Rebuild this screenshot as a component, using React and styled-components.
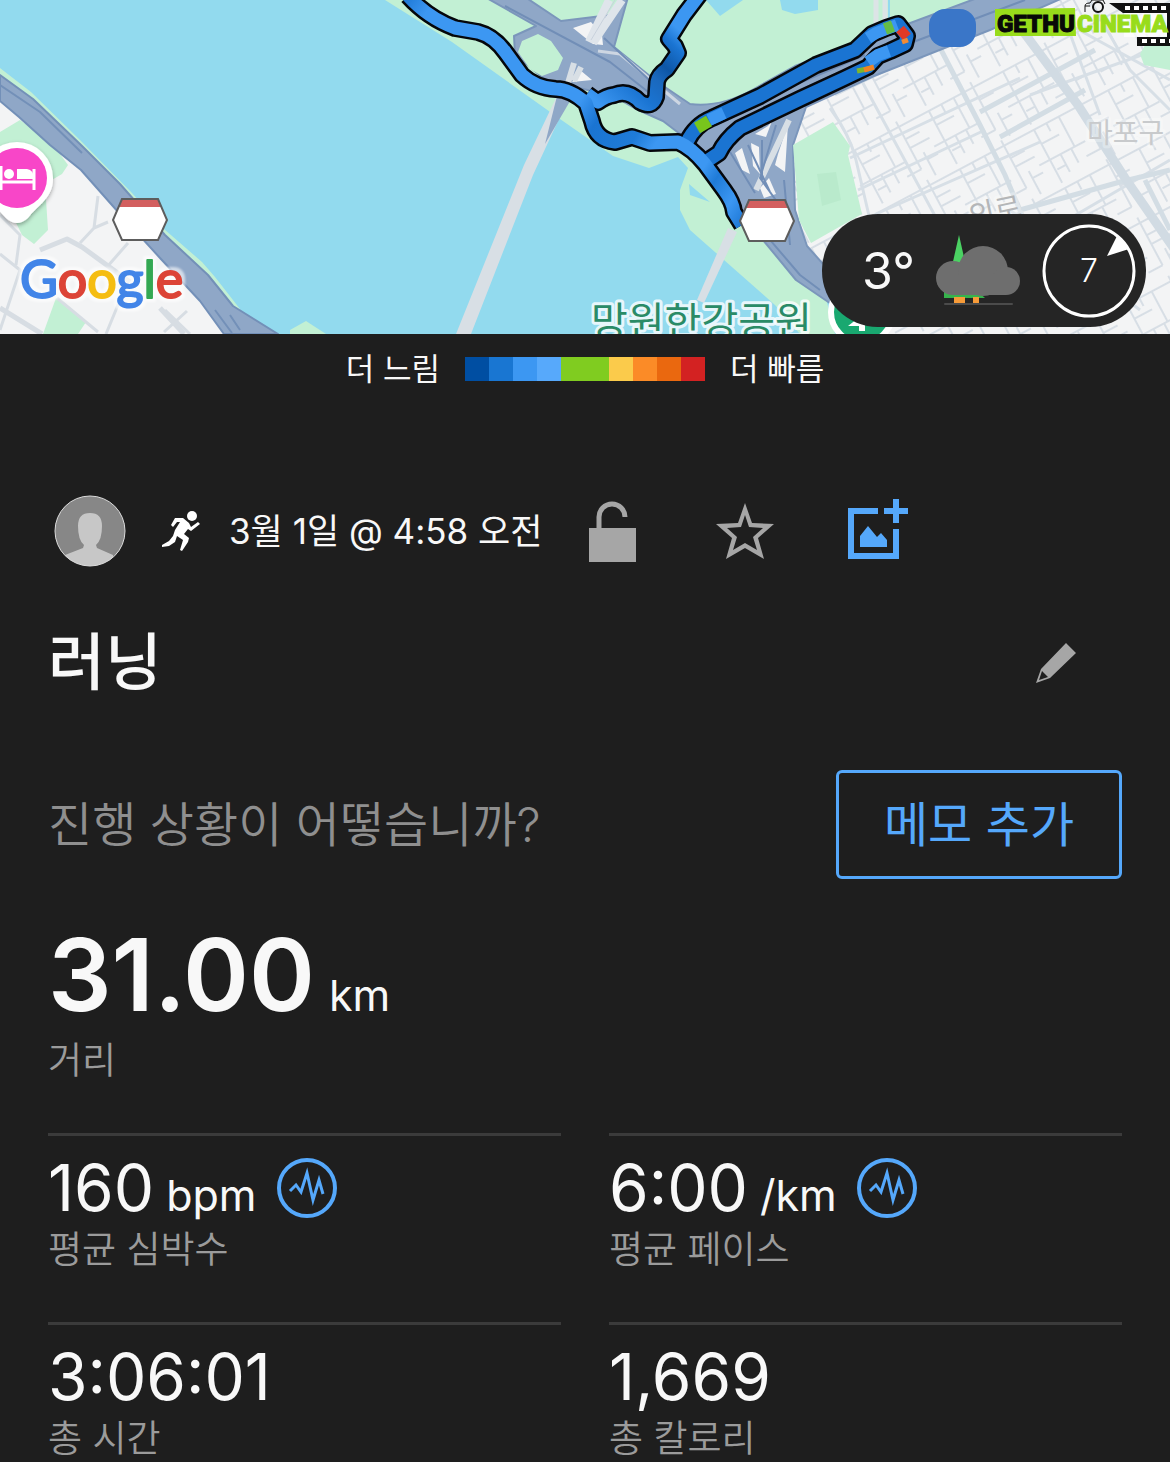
import React from 'react'
import styled, { createGlobalStyle } from 'styled-components'

const GlobalStyle = createGlobalStyle`
  * {
    box-sizing: border-box;
  }
  body {
    margin: 0;
    background: #1e1e1e;
    color: #f8f8f8;
    font-family: Inter, 'Noto Sans CJK KR', sans-serif;
  }
`

const MapArea = styled.section`
  position: relative;
  height: 334px;
  overflow: hidden;
  background: #92daee;
`

const MapCanvas = styled.svg`
  display: block;
  width: 100%;
  height: 100%;
`

const Weather = styled.div`
  position: absolute;
  right: 24px;
  bottom: 7px;
  display: flex;
  align-items: center;
  justify-content: space-between;
  width: 324px;
  height: 113px;
  padding: 0 10px 0 40px;
  border-radius: 56px;
  background: #252525;
`

const Temperature = styled.span`
  font-size: 50px;
  line-height: 60px;
`

const Legend = styled.div`
  display: flex;
  align-items: center;
  justify-content: center;
  gap: 25px;
  padding-top: 13px;
  font-size: 31px;
  line-height: 44px;
`

const Scale = styled.div`
  display: flex;
`

const Swatch = styled.span`
  width: 24px;
  height: 24px;
  background: ${props => props.$color};
`

const Content = styled.main`
  padding: 104px 48px 0;
`

const Meta = styled.header`
  display: flex;
  align-items: center;
  height: 72px;
  padding-left: 6px;
`

const Sport = styled.span`
  display: flex;
  margin: 0 28px 0 36px;
`

const When = styled.time`
  margin-right: 34px;
  font-size: 35px;
  line-height: 44px;
  white-space: nowrap;
`

const IconButton = styled.button`
  display: flex;
  align-items: center;
  justify-content: center;
  width: 72px;
  height: 72px;
  padding: 0;
  border: 0;
  background: none;
  color: ${props => (props.$active ? '#55a8fb' : '#a6a6a6')};
  cursor: pointer;
`

const Actions = styled.div`
  display: flex;
  gap: 61px;
`

const TitleRow = styled.div`
  display: flex;
  align-items: center;
  justify-content: space-between;
  margin-top: 52px;
  padding-right: 30px;
`

const Title = styled.h1`
  margin: 0;
  font-size: 62px;
  font-weight: 500;
  line-height: 88px;
`

const NoteRow = styled.div`
  display: flex;
  align-items: center;
  justify-content: space-between;
  margin-top: 63px;
`

const Question = styled.p`
  margin: 0;
  color: #8f8f8f;
  font-size: 48px;
  font-weight: 350;
  line-height: 60px;
`

const NoteButton = styled.button`
  width: 286px;
  height: 109px;
  padding: 0;
  border: 3px solid #55a8fb;
  border-radius: 6px;
  background: none;
  color: #55a8fb;
  font-family: inherit;
  font-size: 48px;
  line-height: 60px;
  cursor: pointer;
`

const Stats = styled.dl`
  display: grid;
  grid-template-columns: 1fr 1fr;
  gap: 50px 48px;
  margin: 36px 0 0;
`

const Stat = styled.div`
  display: flex;
  flex-direction: column-reverse;
  padding-top: 16px;
  border-top: 3px solid #3b3b3b;
`

const MainStat = styled(Stat)`
  grid-column: 1 / -1;
  padding: 0;
  border: 0;
`

const Value = styled.dd`
  display: flex;
  align-items: ${props => (props.$large ? 'baseline' : 'center')};
  gap: ${props => (props.$large ? '14px' : '20px')};
  margin: 0;
  font-size: ${props => (props.$large ? '100px' : '64px')};
  font-weight: ${props => (props.$large ? 600 : 400)};
  line-height: ${props => (props.$large ? '120px' : '72px')};
`

const Unit = styled.small`
  font-size: 43px;
  font-weight: 400;
  line-height: 44px;
  white-space: pre;
`

const Label = styled.dt`
  margin-top: 4px;
  color: #9b9b9b;
  font-size: 37px;
  font-weight: 350;
  line-height: 44px;
`

const ChartLink = styled.a`
  display: flex;
  color: #55a8fb;
`

const paces = [
  '#004ea2',
  '#1976d2',
  '#3c97f2',
  '#57a9fb',
  '#80cc20',
  '#80cc20',
  '#fbcb4b',
  '#fb8b27',
  '#ea680f',
  '#d32222',
]

const stats = [
  { label: '평균 심박수', value: '160', unit: 'bpm', chart: true },
  { label: '평균 페이스', value: '6:00', unit: '/km', chart: true },
  { label: '총 시간', value: '3:06:01' },
  { label: '총 칼로리', value: '1,669' },
]

const mainTrack =
  'M408 -4 Q428 18 455 28 L478 32 Q494 36 506 53 L522 75 Q536 88 556 89 Q570 89 586 103 L592 121 Q596 140 615 142 L632 137 L650 143 L678 142 Q692 148 705 164 L724 190 Q733 202 734 212 L742 225'
const bridgeTrack =
  'M587 94 L598 102 Q606 96 614 95 Q628 89 640 102 Q652 109 656 97 L657 82 Q658 75 667 69 L678 53 L675 46 L669 39 L684 15 L700 -6'
const loopTrack =
  'M687 142 Q695 125 712 118 L760 96 L816 65 L855 50 L872 34 L886 28 L898 24 L907 36 L905 44 L890 51 L878 56 L868 67 L845 78 L800 99 L740 128 Q725 140 719 153 L707 161'

const Streets = () => (
  <g clipPath="url(#city)">
    <rect x="780" width="390" height="334" fill="#f3f4f5" />
    <rect x="780" width="390" height="334" fill="url(#blocks)" />
    <g fill="none" stroke="#d7dfe6" strokeWidth="3">
      <path d="M858 74 L940 225 M830 108 Q850 135 856 160 L870 220 M850 158 L1020 78 M858 190 L985 130 M876 214 L1040 142 M835 95 L1010 10" />
      <path d="M1030 95 L1170 45 M1070 25 L1170 80 M1090 0 L1130 70 L1170 110 M1065 20 L1100 115 M1010 210 L1140 310 M1170 160 L1050 230" />
    </g>
    <g fill="none" stroke="#d3dde4" strokeWidth="5">
      <path d="M938 44 L980 125 L1005 175 L1022 215 M980 112 L1095 50 M1000 137 L1085 90 M1020 210 L1120 182 L1170 170" />
      <path d="M1020 215 L960 260 M1145 180 L1170 230" />
    </g>
    <path d="M1022 30 L1078 105 L1125 178 L1175 250" fill="none" stroke="#d1dbe3" strokeWidth="9" />
    <path d="M1140 54 L1148 40 L1170 35 V70 L1144 65Z" fill="#c2f0d4" />
  </g>
)

const Roads = () => (
  <g strokeLinejoin="round">
    <path d="M0 68 L31 92 L80 140 L132 193 L164 229 L202 262 L215 277 L240 309 L240 334 H0Z" fill="#c2f0d4" />
    <path d="M0 92 L50 140 L82 171 L120 213 L160 258 L205 302 L224 334 H0Z" fill="#f3f4f5" />
    <path d="M0 132 L20 120 L52 143 L68 165 L62 174 L45 184 L48 230 L34 244 L22 235 L0 190Z M56 298 L86 322 L78 334 H43Z" fill="#c2f0d4" />
    <g fill="none" stroke="#d7dde3" strokeWidth="3">
      <path d="M0 215 L20 235 L16 265 M98 196 L94 228 L80 243 M108 222 L94 228 M128 243 L107 267 M0 254 L20 270 L0 330 M57 298 L98 332 M165 310 L190 334 M187 311 L164 332 M120 300 L106 334" />
      <path d="M40 250 L67 239 L82 247 L130 282 M0 308 L42 334 M160 308 L184 334" strokeWidth="5" />
    </g>
    <path d="M0 75 L33 99 L81 145 L120 184 L165 235 L208 275 L233 306 L278 334 H224 L200 301 L160 258 L119 213 L81 170 L50 145 L19 117 L0 101Z" fill="#8fa7c7" stroke="#7390b8" strokeWidth="2" />
    <path d="M0 85 L40 112 L82 153 M215 310 L232 333 M230 315 L240 330" fill="none" stroke="#7390b8" strokeWidth="2" />
    <path d="M290 330 L306 321 L326 334 H290Z" fill="#c2f0d4" />

    <path d="M385 0 L452 42 L560 119 L613 156 L649 168 L678 157 L688 168 L680 190 V210 L690 230 L775 305 L800 334 H835 L820 275 L790 220 L790 145 L806 107 L876 76 L1050 0Z" fill="#c2f0d4" />
    <path d="M706 0 L720 16 L743 0Z M780 0 L782 10 L795 14 L818 10 V0Z M689 184 L710 202 L690 195Z" fill="#92daee" />
    <path d="M885 0 V36 M876 0 V34" stroke="#dce4e6" strokeWidth="5" />
    <path d="M889 0 V28" stroke="#92daee" strokeWidth="2" />
    <path d="M456 334 L524 165 L566 77 L577 80 L533 175 L471 334Z" fill="#d8dfe5" />
    <path d="M559 88 L573 96 L545 144Z" fill="#8fa7c7" />
    <path d="M728 228 L737 232 L704 303 L697 300Z" fill="#d8dfe5" />

    <g fill="#8fa7c7" stroke="#7b96bb" strokeWidth="2">
      <path d="M485 -3 H525 L561 21 L610 15 L621 -3 H628 L614 47 L656 81 L690 104 Q720 108 754 89 L795 66 L870 38 L980 -3 H1065 L990 30 L874 76 L806 107 L793 145 L795 210 L807 246 L840 283 V310 L796 280 L763 240 L744 215 L710 165 L680 134 L663 121 L600 93 L546 80 L515 55 L514 36 L536 26Z" />
    </g>
    <path d="M522 41 L538 34 L551 41 L563 58 L558 70 L542 76 L530 69 L518 52Z M602 114 L622 102 L650 118 L667 136 L640 131 L606 131Z" fill="#c2f0d4" />
    <path d="M573 28 L591 22 L602 35 L603 45 L593 44Z M580 70 L592 80 L572 82Z M735 153 L742 148 L750 174 L742 170Z M751 143 L759 147 L760 174 L753 166Z M768 126 L772 121 L766 137 L755 134Z M778 154 L788 124 L785 172 L775 165Z M760 188 L769 178 L776 194 L764 198Z" fill="#f3f4f5" />
    <path d="M609 0 L589 42 M622 0 L593 43" fill="none" stroke="#dfe5eb" strokeWidth="8" />
    <path d="M615 0 L591 40" fill="none" stroke="#c8d1dc" strokeWidth="1" />
    <path d="M598 51 L620 54 L680 104" fill="none" stroke="#cdd6e2" strokeWidth="3" />
    <path d="M574 63 L568 83 M581 67 L574 81 M789 120 L756 190" fill="none" stroke="#d8dfe5" strokeWidth="6" />
    <path d="M505 6 L610 62 L661 102 M604 38 L660 90 M730 152 L755 193 M748 145 L770 192 M762 140 V180 M776 125 L760 178 L790 220 M784 180 L790 245 M748 214 L800 275 L820 290 M800 90 L876 56 L1025 0 M760 100 L865 55" fill="none" stroke="#718eb7" strokeWidth="2" />
    <path d="M793 145 L833 122 L850 146 L848 155 L862 214 L811 243 L799 220Z" fill="#c2f0d4" />
    <path d="M817 174 L836 172 L841 200 L822 206Z" fill="#b9eacc" />
  </g>
)

const Track = () => (
  <g fill="none" strokeLinejoin="round">
    <g stroke="#05070b" strokeWidth="18">
      <path d={loopTrack} />
      <path d={bridgeTrack} />
      <path d={mainTrack} />
    </g>
    <path d={loopTrack} stroke="#1a74d2" strokeWidth="13" />
    <path d={bridgeTrack} stroke="url(#bridgePace)" strokeWidth="13" />
    <path d={mainTrack} stroke="url(#mainPace)" strokeWidth="13" />
    <path d="M709 120 L724 113" stroke="#3c97f2" strokeWidth="12" />
    <path d="M697 128 L709 121" stroke="#78c51c" strokeWidth="12" />
    <path d="M868 38 L876 33 L897 25 M868 62 L878 55 L889 51" stroke="#3c97f2" strokeWidth="12" />
    <path d="M885 29 L893 26" stroke="#65bd46" strokeWidth="12" />
    <path d="M900 29 L907 37" stroke="#e23a26" strokeWidth="10" />
    <path d="M902 42 L908 40" stroke="#f28b34" strokeWidth="5" />
    <path d="M857 71 L872 68" stroke="#7eb52c" strokeWidth="5" />
    <path d="M864 70 L874 67" stroke="#f08325" strokeWidth="5" />
  </g>
)

const Shield = ({ x, y }) => (
  <g transform={`translate(${x} ${y})`}>
    <path d="M10 1 H46 L55 22 L46 42 H10 L1 22Z" fill="#fff" />
    <path d="M10 2 H46 L49 9 H7Z" fill="#d35f5f" />
    <path d="M10 1 H46 L55 22 L46 42 H10 L1 22Z" fill="none" stroke="#5d5d5d" strokeWidth="2" />
  </g>
)

const HotelPin = () => (
  <g>
    <path d="M17 142 A36 36 0 0 1 53 179 C53 198 38 205 28 218 Q17 228 6 218 C-5 205 -19 198 -19 179 A36 36 0 0 1 17 142Z" fill="#fff" filter="url(#pinShadow)" />
    <circle cx="17" cy="178" r="30" fill="#f846c8" />
    <path d="M1 166 V190 M1 182 H34 M34 169 V190" stroke="#fff" strokeWidth="3" />
    <circle cx="9" cy="174" r="5" fill="#fff" />
    <path d="M17 169 H27 Q34 170 34 179 H17Z" fill="#fff" />
  </g>
)

const Watermark = () => (
  <g>
    <path d="M1109 3 H1170 V46 H1137 V37 H1167 V13 H1123Z" fill="#111" />
    <path d="M1125 8 H1170 M1142 41 H1170" stroke="#fff" strokeWidth="4" strokeDasharray="5 4" />
    <path d="M1124 13 H1167 V37 H1124Z" fill="#fff" fillOpacity=".7" />
    <path d="M1085 12 V6 Q1085 3 1090 3 L1092 0 H1103 L1105 4 M1085 6 H1090" fill="none" stroke="#111" strokeWidth="1" />
    <circle cx="1098" cy="7" r="5" fill="none" stroke="#111" strokeWidth="2" />
    <path d="M995 9 L1075 8 L1076 36 H995Z" fill="#98dc1b" />
    <g fontFamily="Roboto, sans-serif" fontSize="24" fontWeight="900" strokeWidth="1">
      <text x="997" y="32" fill="#080808" stroke="#080808">GETHU</text>
      <text x="1077" y="32" fill="#98dc1b" stroke="#98dc1b">CINEMA</text>
    </g>
  </g>
)

const GoogleLetters = () => (
  <>
    <tspan fill="#4285e8" stroke="#4285e8">G</tspan>
    <tspan fill="#dc4437" stroke="#dc4437">o</tspan>
    <tspan fill="#f5bd12" stroke="#f5bd12">o</tspan>
    <tspan fill="#4285e8" stroke="#4285e8">g</tspan>
    <tspan fill="#34a853" stroke="#34a853">l</tspan>
    <tspan fill="#dc4437" stroke="#dc4437">e</tspan>
  </>
)

const RouteMap = () => (
  <MapCanvas viewBox="0 0 1170 334" preserveAspectRatio="xMidYMid slice" role="img" aria-label="러닝 경로 지도">
    <defs>
      <clipPath id="city">
        <path d="M1050 0 H1170 V334 H850 L815 270 L790 220 V145 L800 107 L870 70 L1000 20Z" />
      </clipPath>
      <pattern id="blocks" width="84" height="66" patternUnits="userSpaceOnUse" patternTransform="rotate(-28)">
        <path
          d="M0 6 H84 M0 40 H52 M12 6 V66 M40 6 V40 M62 0 V54 M12 22 H32 M26 6 V15 M62 20 H78 M62 30 H84 M24 40 V60 M36 40 V56 M24 52 H14 M62 54 H46 M72 40 V66 M72 48 H84"
          fill="none"
          stroke="#d7dee5"
          strokeWidth="2"
        />
      </pattern>
      <linearGradient id="mainPace" gradientUnits="userSpaceOnUse" x1="400" y1="0" x2="745" y2="225">
        <stop offset="0" stopColor="#1a74d2" />
        <stop offset=".07" stopColor="#3c97f2" />
        <stop offset=".5" stopColor="#3c97f2" />
        <stop offset=".56" stopColor="#1a74d2" />
        <stop offset=".66" stopColor="#1f7bd8" />
        <stop offset=".71" stopColor="#3c97f2" />
        <stop offset=".84" stopColor="#3c97f2" />
        <stop offset=".88" stopColor="#1f7bd8" />
        <stop offset=".94" stopColor="#3c97f2" />
        <stop offset="1" stopColor="#1a74d2" />
      </linearGradient>
      <linearGradient id="bridgePace" gradientUnits="userSpaceOnUse" x1="600" y1="105" x2="700" y2="0">
        <stop offset="0" stopColor="#3c97f2" />
        <stop offset=".25" stopColor="#1a74d2" />
        <stop offset=".4" stopColor="#1a68bd" />
        <stop offset=".5" stopColor="#0d56a6" />
        <stop offset=".65" stopColor="#1a74d2" />
        <stop offset=".75" stopColor="#3c97f2" />
      </linearGradient>
      <filter id="pinShadow" x="-20%" y="-20%" width="140%" height="140%">
        <feDropShadow dx="0" dy="2" stdDeviation="2" floodOpacity=".35" />
      </filter>
      <filter id="logoHalo" x="-10%" y="-20%" width="120%" height="140%" colorInterpolationFilters="sRGB">
        <feMorphology in="SourceAlpha" operator="dilate" radius="3" result="wide" />
        <feGaussianBlur in="wide" stdDeviation="1" result="soft" />
        <feFlood floodColor="#fff" floodOpacity=".6" />
        <feComposite in2="soft" operator="in" result="halo" />
        <feMerge>
          <feMergeNode in="halo" />
          <feMergeNode in="SourceGraphic" />
        </feMerge>
      </filter>
    </defs>
    <Streets />
    <Roads />
    <Track />
    <rect x="929" y="9" width="47" height="38" rx="16" fill="#3a76c8" />
    <Shield x="112" y="198" />
    <Shield x="739" y="199" />
    <HotelPin />
    <g fontFamily="'Noto Sans CJK KR', sans-serif" paintOrder="stroke" stroke="#fff" strokeWidth="6" strokeLinejoin="round">
      <text x="591" y="336" fontSize="40" fill="#2a8b67" strokeOpacity=".8">망원한강공원</text>
      <text x="1087" y="143" fontSize="28" fill="#c8cacc" strokeOpacity=".3">마포구</text>
      <text x="971" y="227" fontSize="29" fill="#b4b6b8" strokeOpacity=".3" transform="rotate(-12 971 227)">의로</text>
    </g>
    <circle cx="862" cy="312" r="31" fill="#19a870" stroke="#fff" strokeWidth="6" />
    <path d="M848 326 L862 315 L868 325 H865 V331 H859 V326Z" fill="#fff" />
    <g fontFamily="Lato, sans-serif" fontSize="52" strokeLinejoin="round">
      <text x="20" y="298" strokeWidth="2" filter="url(#logoHalo)">
        <GoogleLetters />
      </text>
    </g>
    <Watermark />
  </MapCanvas>
)

const CloudIcon = () => (
  <svg width="86" height="72" viewBox="0 0 86 72" aria-hidden="true">
    <path d="M24 0 L33 40 H15Z" fill="#4bd263" />
    <path d="M9 56 H42 L50 63 H9Z" fill="#36b34c" />
    <path d="M19 62 H30 V68 H19Z M38 62 H44 V68 H38Z" fill="#f79b38" />
    <g fill="#6e6e6e">
      <circle cx="18" cy="43" r="17" />
      <circle cx="48" cy="36" r="25" />
      <circle cx="71" cy="46" r="14" />
      <path d="M18 40 H71 V60 H18Z" />
    </g>
    <path d="M10 69 H77" stroke="#4b4b4b" strokeWidth="2" strokeLinecap="round" />
  </svg>
)

const WindDial = ({ speed }) => (
  <svg width="94" height="94" viewBox="0 0 94 94" role="img" aria-label={`풍속 ${speed}`}>
    <circle cx="47" cy="47" r="45" fill="none" stroke="#fff" strokeWidth="3" />
    <path d="M65 32 L75 12 L87 25Z" fill="#fff" />
    <text x="47" y="58" textAnchor="middle" fontSize="32" fontWeight="300" fill="#fff">
      {speed}
    </text>
  </svg>
)

const Avatar = () => (
  <svg width="72" height="72" viewBox="0 0 72 72" role="img" aria-label="프로필">
    <clipPath id="avatarClip">
      <circle cx="36" cy="36" r="35" />
    </clipPath>
    <circle cx="36" cy="36" r="35" fill="#878787" />
    <path
      clipPath="url(#avatarClip)"
      d="M24 31 Q24 18 36 18 Q48 18 48 31 Q48 45 42 50 L43 53 L59 60 V72 H11 V60 L29 53 L30 50 Q24 45 24 31Z"
      fill="#c7c7c7"
    />
    <circle cx="36" cy="36" r="35" fill="none" stroke="#dcdcdc" strokeWidth="1" />
  </svg>
)

const RunnerIcon = () => (
  <svg width="39" height="42" viewBox="0 0 39 42" aria-hidden="true">
    <circle cx="30" cy="6" r="5" fill="#fff" />
    <path
      d="M13 8 L21 8 L27 13 L29 17 L36 12 L38 14 L29 21 L26 19 L22 24 L27 28 L26 32 L20 41 L18 40 L21 30 L15 26 L13 32 L7 36 L0 37 L0 35 L7 31 L11 26 L13 20 L18 12 L15 12 L11 17 L9 15Z"
      fill="#fff"
    />
  </svg>
)

const LockIcon = () => (
  <svg width="48" height="62" viewBox="0 0 48 62" aria-hidden="true">
    <path d="M1 28 H48 V62 H1Z" fill="currentColor" />
    <path d="M11 29 V17 A13 13 0 0 1 37 17" fill="none" stroke="currentColor" strokeWidth="5" />
  </svg>
)

const StarIcon = () => (
  <svg width="60" height="58" viewBox="0 0 60 58" aria-hidden="true">
    <path
      fillRule="evenodd"
      d="M30 1 L37 21 L59 22 L43 36 L49 57 L30 46 L11 57 L17 36 L1 22 L23 21Z M30 13 L26 25 L12 26 L22 35 L18 48 L30 41 L42 48 L38 35 L48 26 L34 25Z"
      fill="currentColor"
    />
  </svg>
)

const AddPhotoIcon = () => (
  <svg width="62" height="66" viewBox="0 0 62 66" aria-hidden="true">
    <path d="M31 13 H4 V58 H49 V31" fill="none" stroke="currentColor" strokeWidth="6" />
    <path d="M37 13 H61 M49 1 V25" fill="none" stroke="currentColor" strokeWidth="6" />
    <path d="M13 49 V38 L21 28 L30 39 L34 35 L40 42 V49Z" fill="currentColor" />
  </svg>
)

const PencilIcon = () => (
  <svg width="42" height="42" viewBox="0 0 42 42" aria-hidden="true">
    <path
      fillRule="evenodd"
      d="M31 1 L41 11 L15 36 L1 41 L6 27Z M7 29 L4 38 L13 35Z"
      fill="currentColor"
    />
  </svg>
)

const PulseIcon = () => (
  <svg width="60" height="60" viewBox="0 0 60 60" aria-hidden="true">
    <circle cx="30" cy="30" r="28" fill="none" stroke="currentColor" strokeWidth="4" />
    <path d="M13 33 L19 27 L24 34 L30 15 L36 42 L42 22 L46 36" fill="none" stroke="currentColor" strokeWidth="3" />
  </svg>
)

const App = () => (
  <>
    <GlobalStyle />
    <MapArea>
      <RouteMap />
      <Weather>
        <Temperature>3°</Temperature>
        <CloudIcon />
        <WindDial speed={7} />
      </Weather>
    </MapArea>
    <Legend>
      <span>더 느림</span>
      <Scale>
        {paces.map((color, i) => (
          <Swatch key={i} $color={color} />
        ))}
      </Scale>
      <span>더 빠름</span>
    </Legend>
    <Content>
      <Meta>
        <Avatar />
        <Sport>
          <RunnerIcon />
        </Sport>
        <When>3월 1일 @ 4:58 오전</When>
        <Actions>
          <IconButton aria-label="공개 설정">
            <LockIcon />
          </IconButton>
          <IconButton aria-label="즐겨찾기">
            <StarIcon />
          </IconButton>
          <IconButton $active aria-label="사진 추가">
            <AddPhotoIcon />
          </IconButton>
        </Actions>
      </Meta>
      <TitleRow>
        <Title>러닝</Title>
        <IconButton aria-label="이름 편집">
          <PencilIcon />
        </IconButton>
      </TitleRow>
      <NoteRow>
        <Question>진행 상황이 어떻습니까?</Question>
        <NoteButton>메모 추가</NoteButton>
      </NoteRow>
      <Stats>
        <MainStat>
          <Label>거리</Label>
          <Value $large>
            31.00 <Unit>km</Unit>
          </Value>
        </MainStat>
        {stats.map(({ label, value, unit, chart }) => (
          <Stat key={label}>
            <Label>{label}</Label>
            <Value>
              <span>
                {value}
                {unit && <Unit> {unit}</Unit>}
              </span>
              {chart && (
                <ChartLink href="#chart" aria-label={`${label} 차트`}>
                  <PulseIcon />
                </ChartLink>
              )}
            </Value>
          </Stat>
        ))}
      </Stats>
    </Content>
  </>
)

export default App
